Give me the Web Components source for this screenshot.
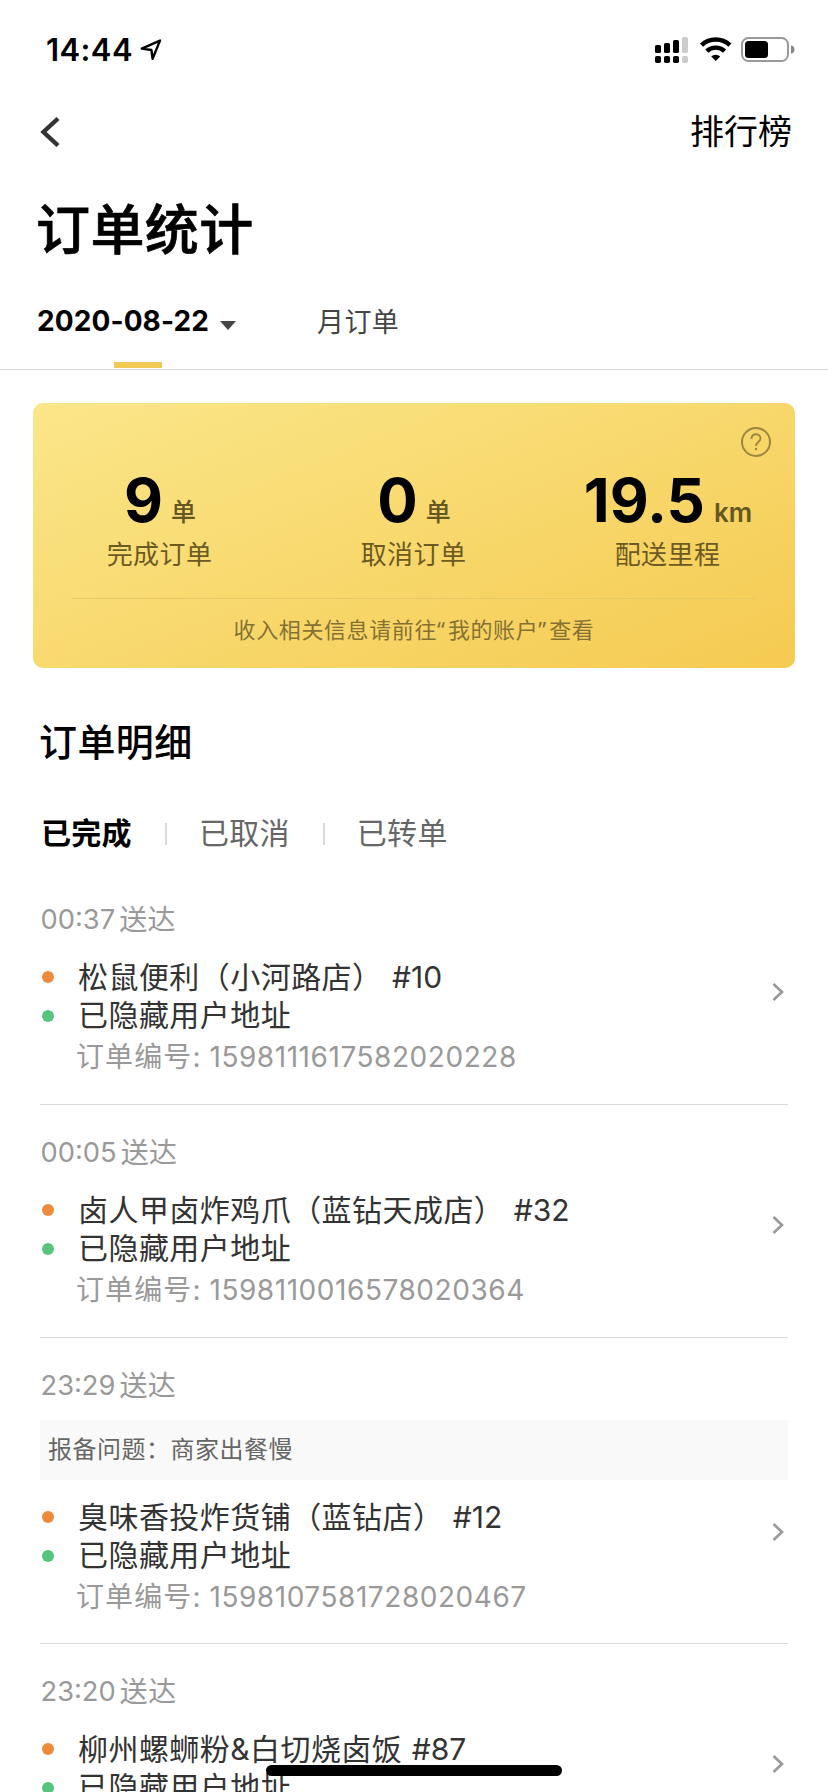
<!DOCTYPE html>
<html lang="zh-CN">
<head>
<meta charset="utf-8">
<title>订单统计</title>
<style>
html,body{margin:0;padding:0;background:#fff;overflow:hidden}
body{width:828px;height:1792px;font-family:Inter,"Noto Sans CJK SC",sans-serif;color:#333}
</style>
</head>
<body>
<order-app></order-app>
<script>
const define=(name,markup)=>customElements.define(name,class extends HTMLElement{
  constructor(){super();this.attachShadow({mode:'open'}).innerHTML=typeof markup==='function'?markup(this):markup;}
});

define('status-bar',`<style>
:host{display:flex;height:88px;box-sizing:border-box;padding:12px 32px 0 46px;align-items:center;justify-content:space-between;color:#000}
.l{display:flex;align-items:center}
.t{font-size:31px;font-weight:600;line-height:36px;letter-spacing:.4px}
.l svg{margin-left:7px}
</style>
<div class="l"><span class="t">14:44</span>
<svg width="22" height="22" viewBox="0 0 22 22"><path d="M1.800 9.600 20 1.600 12.600 19.800 11.400 11Z" fill="none" stroke="#000" stroke-width="2.400" stroke-linejoin="round"/></svg></div>
<svg width="142" height="28" viewBox="0 0 142 28">
<g fill="#000"><rect x="1" y="9" width="6" height="8" rx="1.6"/><rect x="10" y="7" width="6" height="10" rx="1.6"/><rect x="19" y="4" width="6" height="13" rx="1.6"/><rect x="1" y="20" width="6" height="7" rx="1.8"/><rect x="10" y="20" width="6" height="7" rx="1.8"/><rect x="19" y="20" width="6" height="7" rx="1.8"/></g>
<g fill="#ccc"><rect x="28" y="1" width="6" height="16" rx="1.6"/><rect x="28" y="20" width="6" height="7" rx="1.8"/></g>
<g fill="none" stroke="#000" stroke-width="4.4"><path d="M47.500 9.200a20.500 20.500 0 0 1 28.400 0"/><path d="M52.800 15.200a12.800 12.800 0 0 1 17.800 0"/></g>
<path d="M57.200 20.600a6.600 6.600 0 0 1 9 0L61.700 25Z"/>
<rect x="88" y="2" width="46" height="23" rx="6.500" fill="none" stroke="#999" stroke-width="2"/><rect x="91" y="5" width="23" height="17" rx="3.500"/>
<path d="M137 9.200q3.500 1 3.500 4.300t-3.500 4.300Z" fill="#888"/></svg>`);

define('nav-bar',`<style>
:host{display:flex;height:86px;align-items:center;justify-content:space-between;padding:0 36px 0 39px;color:#000;font-size:34px}
span{padding-bottom:4px}
</style><svg width="22" height="32" viewBox="0 0 22 32"><path d="M19 3.500 4.500 17 19 30.500" fill="none" stroke="#333" stroke-width="4.400"/></svg><span><slot></slot></span>`);

define('page-title',`<style>:host{display:block;height:108px;line-height:110px;padding:2px 0 0 36px;font-size:54px;font-weight:500;letter-spacing:.4px;color:#000;-webkit-text-stroke:.7px #000}</style><slot></slot>`);

define('date-tabs',`<style>
:host{display:flex;height:85px;border-bottom:1px solid #d8d8d8;padding-left:37px;line-height:74px}
.on{position:relative;width:204px;display:flex;color:#000;font-weight:700;font-size:28px;letter-spacing:.1px;align-items:flex-start}
.on svg{margin:37px 0 0 11px}
.on i{position:absolute;left:77px;bottom:1px;width:48px;height:6px;background:#f3c955}
.m{margin-left:76px;padding-top:2px;font-size:27px;letter-spacing:.4px;color:#444}
</style><div class="on"><span>2020-08-22</span><svg width="16" height="9"><path d="M0 0h16L8 9Z" fill="#444"/></svg><i></i></div><div class="m">月订单</div>`);

define('stat-item',h=>`<style>
:host{display:block;text-align:center;width:254px;white-space:nowrap}
.v{height:64px;line-height:66px;color:#000;font-weight:700;font-size:60px}
.u{font-size:25px;font-weight:500;color:#665722;margin-left:8px;position:relative;top:-1px}
.u.k{font-weight:600;font-size:26px;margin-left:9px;top:0}
.n{font-size:26px;line-height:40px;color:#6c5a22;letter-spacing:.4px;margin:4px 1px 0 0}
</style><div class="v">${h.getAttribute('value')}<span class="u ${h.getAttribute('unit')==='km'?'k':''}">${h.getAttribute('unit')}</span></div><div class="n"><slot></slot></div>`);

define('summary-card',`<style>
:host{display:block;position:relative;margin:33px 33px 0;height:265px;border-radius:10px;background:linear-gradient(158deg,#fbe68a 0%,#f8da70 45%,#f5ca51 100%);box-sizing:border-box;padding-top:64px}
.s{display:flex}
.note{margin:23px 39px 0;border-top:1px solid #e6c866;text-align:center;line-height:60px;font-size:22px;letter-spacing:.6px;color:#857233}
svg{position:absolute;right:23px;top:23px}
</style><svg width="32" height="32" viewBox="0 0 32 32" fill="none" stroke="#9d8640" stroke-width="2"><circle cx="16" cy="16" r="14"/><path d="M11.500 13c0-3 2-4.700 4.500-4.700s4.500 1.700 4.500 4.200c0 3.500-4.500 3.500-4.500 7.500" stroke-width="1.900"/><circle cx="16" cy="23" r="1.200" fill="#9d8640" stroke="none"/></svg>
<div class="s"><slot></slot></div><div class="note"><slot name="note"></slot></div>`);

define('section-title',`<style>:host{display:block;margin-top:44px;padding-left:39px;font-size:38px;font-weight:500;line-height:60px;letter-spacing:.4px;color:#000}</style><slot></slot>`);

define('state-tabs',`<style>
:host{display:flex;align-items:center;padding:0 41px;margin-top:29px;height:60px;font-size:30px;color:#666;letter-spacing:.3px}
b{color:#000;font-weight:700}
i{width:2px;height:22px;background:#d9d9d9;margin:6px 32px 0 33px}
</style><b>已完成</b><i></i><span>已取消</span><i></i><span>已转单</span>`);

define('order-item',h=>`<style>
:host{display:block;position:relative;margin:0 40px;border-bottom:1px solid #d9d9d9;box-sizing:border-box}
.box{height:232px;padding-top:28px;box-sizing:border-box;position:relative}
:host([issue]) .box{height:305px}
.time{font-size:28px;line-height:40px;color:#999;letter-spacing:.4px;display:flex}
.time span{margin-right:4px;font-size:27.3px;letter-spacing:0;padding-left:.5px}
.q{height:60px;line-height:60px;margin:14px 0 0;background:#f9f9f9;padding-left:8px;font-size:24px;letter-spacing:.5px;color:#666}
.rows{display:flex;align-items:center;justify-content:space-between;margin-top:18px}
.line{display:flex;align-items:center;height:38px;font-size:30px;letter-spacing:.45px;color:#333;white-space:pre}
.line span{padding-bottom:4px}
.line .e{padding:0 0 0 1px}
.line:before{content:"";width:12px;height:12px;border-radius:50%;background:#ee8a3c;margin:0 24px 0 2px}
.line.g{height:40px}
.line.g span{padding-bottom:6px}
.line.g:before{background:#56c47c}
.e{letter-spacing:0}
.no{font-size:28px;line-height:42px;color:#999;padding-left:36px;letter-spacing:1.100px;white-space:pre}
.no .e{letter-spacing:.55px}
svg{margin:0 4px 52px 0}
</style><div class="box"><div class="time"><span>${h.getAttribute('time')}</span>送达</div>
${h.hasAttribute('issue')?`<div class="q">报备问题：${h.getAttribute('issue')}</div>`:''}
<div class="rows"><div><div class="line"><span><slot></slot><span class="e"> ${h.getAttribute('tag')}</span></span></div><div class="line g"><span>已隐藏用户地址</span></div><div class="no">${h.hasAttribute('no')?`订单编号<span class="e">: ${h.getAttribute('no')}</span>`:'&nbsp;'}</div></div>
<svg width="12" height="20" viewBox="0 0 12 20"><path d="M1.500 2 10 10 1.500 18" fill="none" stroke="#999" stroke-width="2.600"/></svg></div></div>`);

define('home-indicator',`<style>:host{display:block;position:absolute;left:266px;top:1765px;width:296px;height:11px;border-radius:6px;background:#000}</style>`);

define('order-app',`<style>:host{display:block;position:relative;width:828px;height:1792px;overflow:hidden;background:#fff}
main{display:flow-root}
.q{font-family:"Noto Sans",sans-serif;letter-spacing:3px}
.list{margin-top:11px}</style>
<main><status-bar></status-bar><nav-bar>排行榜</nav-bar><page-title>订单统计</page-title><date-tabs></date-tabs>
<summary-card><stat-item value="9" unit="单">完成订单</stat-item><stat-item value="0" unit="单">取消订单</stat-item><stat-item value="19.5" unit="km">配送里程</stat-item><span slot="note">收入相关信息请前往<span class="q">“</span>我的账户<span class="q">”</span>查看</span></summary-card>
<section-title>订单明细</section-title><state-tabs></state-tabs>
<div class="list">
<order-item time="00:37" tag="#10" no="1598111617582020228">松鼠便利（小河路店）</order-item>
<order-item time="00:05" tag="#32" no="1598110016578020364">卤人甲卤炸鸡爪（蓝钻天成店）</order-item>
<order-item time="23:29" issue="商家出餐慢" tag="#12" no="1598107581728020467">臭味香投炸货铺（蓝钻店）</order-item>
<order-item time="23:20" tag="#87">柳州螺蛳粉&amp;白切烧卤饭</order-item>
</div></main><home-indicator></home-indicator>`);
</script>
</body>
</html>
